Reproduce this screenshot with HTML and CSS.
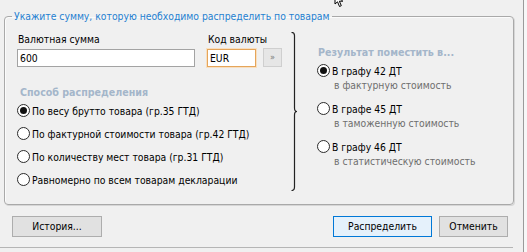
FILE: index.html
```html
<!DOCTYPE html>
<html lang="ru">
<head>
<meta charset="utf-8">
<link rel="stylesheet" href="styles.css">
</head>
<body>
<div class="window">
  <fieldset class="group">
    <legend class="group-title">Укажите сумму, которую необходимо распределить по товарам</legend>
    <div class="cols">
      <div class="col-left">
        <div class="fields">
          <div class="field field-sum">
            <label class="lbl">Валютная сумма</label>
            <div class="input">600</div>
          </div>
          <div class="field field-code">
            <label class="lbl">Код валюты</label>
            <div class="input input-focus">EUR</div>
          </div>
          <div class="more-btn">»</div>
        </div>
        <div class="section-title">Способ распределения</div>
        <div class="radio-list">
          <div class="radio-row"><span class="radio checked"></span><span>По весу брутто товара (гр.35 ГТД)</span></div>
          <div class="radio-row"><span class="radio"></span><span>По фактурной стоимости товара (гр.42 ГТД)</span></div>
          <div class="radio-row"><span class="radio"></span><span>По количеству мест товара (гр.31 ГТД)</span></div>
          <div class="radio-row"><span class="radio"></span><span>Равномерно по всем товарам декларации</span></div>
        </div>
      </div>
      <svg class="brace" width="10" height="159" viewBox="0 0 10 159">
        <path d="M1.5 0.5 Q4.5 0.5 4.5 3.5 L4.5 76 Q4.5 79.5 7 79.5 Q4.5 79.5 4.5 83 L4.5 155 Q4.5 158.5 1.5 158.5" fill="none" stroke="#222" stroke-width="1.2"/>
      </svg>
      <div class="col-right">
        <div class="section-title">Результат поместить в...</div>
        <div class="result-list">
          <div class="result">
            <div class="radio-row"><span class="radio checked"></span><span>В графу 42 ДТ</span></div>
            <div class="sub">в фактурную стоимость</div>
          </div>
          <div class="result">
            <div class="radio-row"><span class="radio"></span><span>В графе 45 ДТ</span></div>
            <div class="sub">в таможенную стоимость</div>
          </div>
          <div class="result">
            <div class="radio-row"><span class="radio"></span><span>В графу 46 ДТ</span></div>
            <div class="sub">в статистическую стоимость</div>
          </div>
        </div>
      </div>
    </div>
  </fieldset>
  <div class="buttons">
    <div class="btn btn-history">История...</div>
    <div class="btn-group">
      <div class="btn btn-default">Распределить</div>
      <div class="btn btn-cancel">Отменить</div>
    </div>
  </div>
  <div class="separator"></div>
  <svg class="cursor" width="14" height="10" viewBox="0 0 14 10">
    <path d="M2 -6 L2 4 L4.5 1.8 L6.5 6.5 L8.3 5.7 L6.4 1.2 L9.8 1.2 Z" fill="#fff" stroke="#000" stroke-width="1"/>
  </svg>
</div>
</body>
</html>
```

FILE: styles.css
```css
* { box-sizing: border-box; }
html, body { margin: 0; padding: 0; }
body {
  background: #f7f7f7;
  font-family: "DejaVu Sans Condensed", "DejaVu Sans", sans-serif;
  font-size: 10.3px;
  color: #000;
  width: 527px;
  height: 252px;
  overflow: hidden;
}
.window {
  position: relative;
  width: 524px;
  height: 252px;
  background: #f0f0f0;
  border-right: 1px solid #9a9a9a;
  padding-top: 9px;
}
.group {
  margin: 0 0 0 4px;
  padding: 0;
  width: 510px;
  height: 196px;
  border: 1px solid #a9a9a9;
  border-radius: 4px;
  box-shadow: 1px 1px 0 #d6d6d6, inset 1px 1px 0 #fbfbfb;
  min-width: 0;
}
.group-title {
  margin-left: 7px;
  padding: 0 2px;
  line-height: 14px;
  color: #1f80d0;
}
.cols {
  display: flex;
  align-items: flex-start;
}
.col-left {
  width: 285px;
  padding-left: 12px;
  padding-top: 10px;
}
.fields {
  display: flex;
  align-items: flex-end;
}
.field { display: flex; flex-direction: column; }
.field-sum { width: 178px; margin-right: 12px; }
.field-code { width: 49px; margin-right: 7px; }
.lbl {
  line-height: 12px;
  height: 12px;
  margin-bottom: 4px;
  padding-left: 1px;
  white-space: nowrap;
}
.input {
  height: 18px;
  line-height: 16px;
  border: 1px solid #a3a3a3;
  background: #fff;
  padding-left: 2px;
}
.input-focus {
  border-color: #e5a55a;
  box-shadow: 0 0 0 1px #f8dfc0;
}
.more-btn {
  width: 19px;
  height: 19px;
  border: 1px solid #cfcfcf;
  background: #e6e6e6;
  color: #777;
  font-size: 9px;
  line-height: 17px;
  text-align: center;
}
.section-title {
  font-weight: bold;
  font-size: 10.6px;
  color: #a4b6ca;
  line-height: 13px;
  white-space: nowrap;
}
.col-left .section-title {
  margin-top: 19px;
  padding-left: 3px;
}
.radio-row {
  display: flex;
  align-items: center;
  height: 23px;
  gap: 2px;
  white-space: nowrap;
}
.radio {
  width: 13px;
  height: 13px;
  border: 1px solid #2b2b2b;
  border-radius: 50%;
  background: #fff;
  display: flex;
  align-items: center;
  justify-content: center;
  flex: none;
}
.radio.checked::after {
  content: "";
  width: 7px;
  height: 7px;
  border-radius: 50%;
  background: #111;
}
.brace {
  margin-top: 9px;
  flex: none;
}
.col-right {
  padding-left: 17px;
  padding-top: 23px;
}
.col-right .section-title { padding-left: 1px; }
.result-list {
  display: flex;
  flex-direction: column;
  gap: 8px;
  margin-top: 4px;
}
.result .radio-row { height: 15px; }
.sub {
  line-height: 15px;
  color: #6e6e6e;
  padding-left: 17px;
  white-space: nowrap;
}
.buttons {
  display: flex;
  justify-content: space-between;
  margin-top: 11px;
  padding: 0 15px 0 12px;
}
.btn-group { display: flex; gap: 7px; }
.btn {
  height: 21px;
  line-height: 19px;
  text-align: center;
  border: 1px solid #adadad;
  background: #e1e1e1;
}
.btn-history { width: 90px; }
.btn-default {
  width: 99px;
  border-color: #0078d7;
  background: #e5f1fb;
}
.btn-cancel { width: 69px; }
.separator {
  margin-top: 10px;
  width: 513px;
  height: 1px;
  background: #b5b5b5;
}
.cursor {
  position: absolute;
  left: 333px;
  top: 0;
}
```
